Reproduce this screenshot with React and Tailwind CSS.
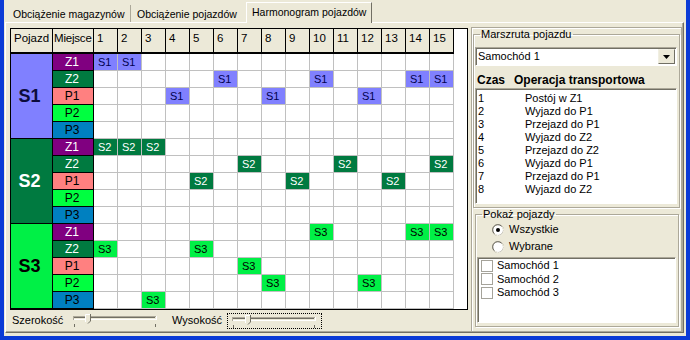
import React from 'react';

const vehicles = [
  {
    id: 'S1',
    bg: 'bg-[#8080ff]',
    big: 'text-[#0c0c3c]',
    text: 'text-[#000050]',
    plan: { Z1: [1, 2], Z2: [6, 10, 14, 15], P1: [4, 8, 12], P2: [], P3: [] },
  },
  {
    id: 'S2',
    bg: 'bg-[#007a40]',
    big: 'text-white',
    text: 'text-white',
    plan: { Z1: [1, 2, 3], Z2: [7, 11, 15], P1: [5, 9, 13], P2: [], P3: [] },
  },
  {
    id: 'S3',
    bg: 'bg-[#00f046]',
    big: 'text-black',
    text: 'text-black',
    plan: { Z1: [10, 14, 15], Z2: [1, 5], P1: [7], P2: [8, 12], P3: [3] },
  },
];

const places = [
  { id: 'Z1', cls: 'bg-[#800080] text-white' },
  { id: 'Z2', cls: 'bg-[#007a40] text-white' },
  { id: 'P1', cls: 'bg-[#ff8080] text-black' },
  { id: 'P2', cls: 'bg-[#00ff40] text-black' },
  { id: 'P3', cls: 'bg-[#0080c0] text-black' },
];

const cols = Array.from({ length: 15 }, (_, i) => i + 1);

const route = [
  'Postój w Z1',
  'Wyjazd do P1',
  'Przejazd do P1',
  'Wyjazd do Z2',
  'Przejazd do Z2',
  'Wyjazd do P1',
  'Przejazd do P1',
  'Wyjazd do Z2',
];

const Trackbar = ({ thumb }) => (
  <svg width="86" height="15" viewBox="0 0 86 15" className="block">
    <line x1="1" y1="3.5" x2="84" y2="3.5" stroke="#aca899" />
    <line x1="2" y1="4.5" x2="83" y2="4.5" stroke="#716f64" />
    <line x1="1" y1="6.5" x2="84" y2="6.5" stroke="#ffffff" />
    <line x1="1.5" y1="3" x2="1.5" y2="7" stroke="#aca899" />
    <line x1="84.5" y1="3" x2="84.5" y2="7" stroke="#ffffff" />
    <path d={`M${thumb} 1.5 H${thumb + 5} V8 L${thumb + 2.5} 11 L${thumb} 8 Z`} fill="#ece9d8" stroke="none" />
    <path d={`M${thumb + 0.5} 9 V1.5 H${thumb + 5}`} fill="none" stroke="#ffffff" />
    <path d={`M${thumb + 5.5} 1 V8 L${thumb + 3} 10.5`} fill="none" stroke="#716f64" />
    <line x1="2.5" y1="11" x2="2.5" y2="14" stroke="#716f64" />
    <line x1="83.5" y1="11" x2="83.5" y2="14" stroke="#716f64" />
  </svg>
);

const Radio = ({ checked }) => (
  <svg width="12" height="12" viewBox="0 0 12 12" className="block">
    <circle cx="6" cy="6" r="5.5" fill="#ffffff" stroke="#aca899" />
    <path d="M2.2 9.5 A5 5 0 0 1 9.5 2.2" fill="none" stroke="#716f64" />
    <path d="M10.3 3.2 A5 5 0 0 1 3.2 10.3" fill="none" stroke="#f1efe2" />
    {checked && <circle cx="6" cy="6" r="2" fill="#000000" />}
  </svg>
);

export default function App() {
  return (
    <div className="w-[690px] h-[340px] bg-[#ECE9D8] border-l-4 border-r-4 border-b-4 border-[#0b3bd6] font-['Liberation_Sans',Arial,sans-serif] text-black text-[11px] leading-[13px] overflow-hidden">
      {/* tabs */}
      <div className="flex items-end h-[22px] pl-[4px] text-[10.5px]">
        <div className="w-[123px] h-[17px] pl-[5px] pt-[3px] border-r border-[#aca899] whitespace-nowrap">
          Obciążenie magazynów
        </div>
        <div className="w-[115px] h-[17px] pl-[6px] pt-[3px] whitespace-nowrap">
          Obciążenie pojazdów
        </div>
        <div className="relative z-10 -mb-px w-[126px] h-[21px] pl-[5px] pt-[3px] bg-[#ECE9D8] border-t border-l border-white border-r border-r-[#716f64] whitespace-nowrap">
          Harmonogram pojazdów
        </div>
      </div>

      {/* sheet */}
      <div className="ml-[1px] w-[679px] h-[311px] border border-t-white border-l-white border-r-[#716f64] border-b-[#716f64] shadow-[inset_-1px_-1px_0_#aca899] flex pl-[4px] pt-[5px]">
        {/* left column */}
        <div className="w-[458px] flex flex-col">
          <div className="w-[458px] h-[282px] border border-black bg-white flex flex-col">
            {/* header */}
            <div className="flex h-[25px] text-[11.5px] leading-[14px]">
              <div className="flex w-[443px] bg-[#ECE9D8] border-b-2 border-black">
                <div className="w-[42px] border-r border-black pl-[3px] pt-[2px]">Pojazd</div>
                <div className="w-[41px] border-r border-black pl-[1px] pt-[2px] whitespace-nowrap tracking-[-0.2px]">Miejsce</div>
                {cols.map((c) => (
                  <div key={c} className="w-[24px] border-r border-black pl-[3px] pt-[2px]">
                    {c}
                  </div>
                ))}
              </div>
            </div>
            {/* body */}
            <div className="flex">
              <div className="w-[42px] flex flex-col">
                {vehicles.map((v) => (
                  <div
                    key={v.id}
                    className={`h-[85px] border-r border-b border-black flex items-center justify-center pr-[4px] text-[18px] font-bold ${v.bg} ${v.big}`}
                  >
                    {v.id}
                  </div>
                ))}
              </div>
              <div className="w-[41px] flex flex-col">
                {vehicles.map((v) =>
                  places.map((p) => (
                    <div
                      key={v.id + p.id}
                      className={`h-[17px] border-r border-b border-black flex items-center justify-center pr-[2px] text-[12px] ${p.cls}`}
                    >
                      {p.id}
                    </div>
                  ))
                )}
              </div>
              <div className="w-[360px] flex flex-col">
                {vehicles.map((v) =>
                  places.map((p) => (
                    <div key={v.id + p.id} className="flex h-[17px]">
                      {cols.map((c) => {
                        const on = v.plan[p.id].includes(c);
                        return (
                          <div
                            key={c}
                            className={`w-[24px] h-[17px] border-r border-b border-[#c0c0c0] pl-[4px] text-[11px] leading-[16px] ${on ? `${v.bg} ${v.text}` : ''}`}
                          >
                            {on ? v.id : ''}
                          </div>
                        );
                      })}
                    </div>
                  ))
                )}
              </div>
            </div>
          </div>

          {/* sliders */}
          <div className="flex items-center h-[21px]">
            <div className="w-[62px] pl-[2px]">Szerokość</div>
            <Trackbar thumb={13} />
            <div className="ml-[14px] w-[55px]">Wysokość</div>
            <div className="w-[95px] h-[16px] border border-dotted border-black pl-[3px] pt-0">
              <Trackbar thumb={14} />
            </div>
          </div>
        </div>

        {/* right panel */}
        <div className="ml-[3px] -mt-px w-[211px] h-[305px] border border-[#aca899] shadow-[inset_1px_1px_0_#fff] flex flex-col">
          <fieldset className="ml-px w-[207px] border border-[#aca899] shadow-[inset_1px_1px_0_#fff,1px_1px_0_#fff] px-[1px] pb-[3px]">
            <legend className="ml-[5px] px-[1px]">Marszruta pojazdu</legend>
            <div className="mt-[6px] w-[202px] h-[19px] bg-white border border-t-[#aca899] border-l-[#aca899] border-r-white border-b-white shadow-[inset_1px_1px_0_#716f64] flex items-center">
              <div className="flex-1 pl-[2px]">Samochód 1</div>
              <div className="w-[17px] h-[15px] mr-[1px] bg-[#ECE9D8] border border-t-[#f1efe2] border-l-[#f1efe2] border-r-[#716f64] border-b-[#716f64] flex items-center justify-center">
                <svg width="7" height="4" viewBox="0 0 7 4">
                  <path d="M0 0 H7 L3.5 4 Z" fill="#000" />
                </svg>
              </div>
            </div>
            <div className="mt-[7px] flex font-bold text-[12px] leading-[14px] pl-[2px]">
              <span className="w-[37px]">Czas</span>
              <span>Operacja transportowa</span>
            </div>
            <div className="mt-[1px] w-[202px] h-[116px] bg-white border border-t-[#aca899] border-l-[#aca899] border-r-white border-b-white shadow-[inset_1px_1px_0_#716f64] pt-[3px] pl-[2px]">
              {route.map((r, i) => (
                <div key={i} className="flex h-[13px]">
                  <span className="w-[47px]">{i + 1}</span>
                  <span>{r}</span>
                </div>
              ))}
            </div>
          </fieldset>

          <fieldset className="ml-[3px] w-[204px] border border-[#aca899] shadow-[inset_1px_1px_0_#fff,1px_1px_0_#fff] px-[1px] pb-[3px]">
            <legend className="ml-[5px] px-[1px]">Pokaż pojazdy</legend>
            <div className="h-[17px] flex items-center pl-[15px]">
              <Radio checked />
              <span className="ml-[5px]">Wszystkie</span>
            </div>
            <div className="h-[17px] flex items-center pl-[15px]">
              <Radio />
              <span className="ml-[5px]">Wybrane</span>
            </div>
            <div className="mt-[2px] w-[199px] h-[66px] bg-white border border-t-[#aca899] border-l-[#aca899] border-r-white border-b-white shadow-[inset_1px_1px_0_#716f64] pt-[1px] pl-[3px]">
              {['Samochód 1', 'Samochód 2', 'Samochód 3'].map((s) => (
                <div key={s} className="flex items-center h-[13.5px]">
                  <div className="w-[12px] h-[12px] border border-[#a5a39a] bg-white" />
                  <span className="ml-[4px]">{s}</span>
                </div>
              ))}
            </div>
          </fieldset>
        </div>
      </div>
    </div>
  );
}
